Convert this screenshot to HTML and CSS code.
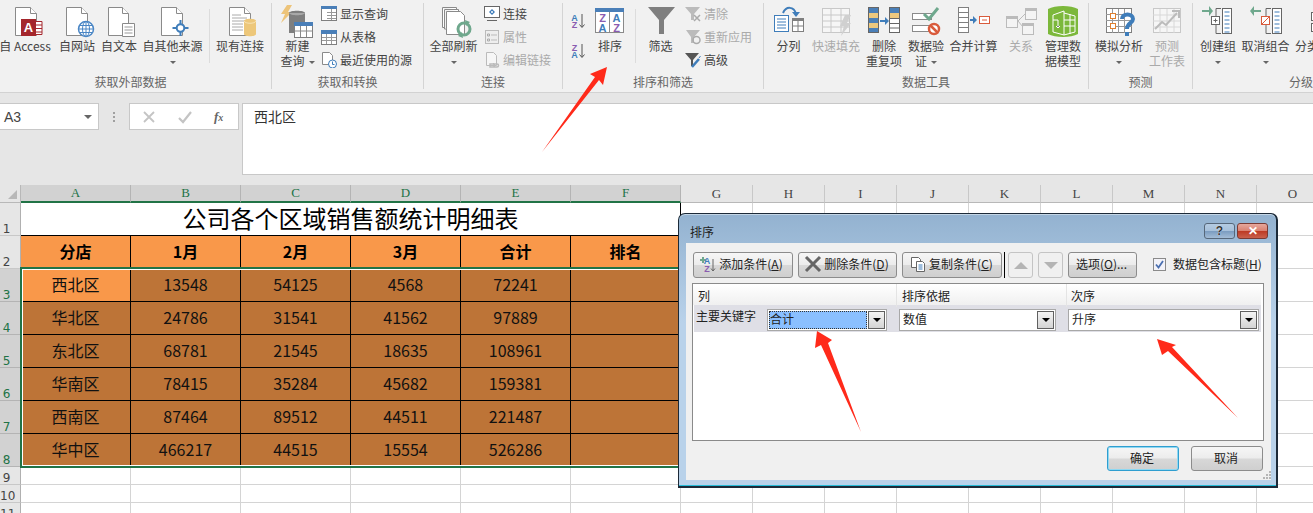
FILE: index.html
```html
<!DOCTYPE html>
<html lang="zh-CN">
<head>
<meta charset="utf-8">
<title>排序</title>
<link rel="stylesheet" href="styles.css">
</head>
<body>
<div class="app">
  <div class="ribbon">
    <section class="group g1">
      <div class="body">
        <div class="big w56 first"><svg class="ico" viewBox="0 0 36 34"><path class="pg" d="M8.500 2.500h15l6 6v22h-21z"/><path class="pg" d="M23.500 2.500v6h6"/><path fill="#fff" stroke="#a4262c" d="M26 16.500h9v13h-9z"/><path stroke="#a4262c" d="M26 20h9M26 23.500h9M26 27h9"/><rect x="14" y="14" width="15" height="17" fill="#a4262c"/><text x="21.500" y="27" class="ltxt wht">A</text></svg><span class="bt">自 Access</span></div>
        <div class="big w36"><svg class="ico" viewBox="0 0 36 34"><path class="pg" d="M7.500 2.500h15l6 6v22h-21z"/><path class="pg" d="M22.500 2.500v6h6"/><circle cx="27" cy="24" r="7.500" fill="#fff" stroke="#4a86c5" stroke-width="1.500"/><path fill="none" stroke="#4a86c5" d="M19.500 24h15M20.500 20.500h13M20.500 27.500h13M27 16.500v15"/><ellipse cx="27" cy="24" rx="3.500" ry="7.500" fill="none" stroke="#4a86c5"/></svg><span class="bt">自网站</span></div>
        <div class="big w36"><svg class="ico" viewBox="0 0 36 34"><path class="pg" d="M7.500 2.500h14l6 6v22h-20z"/><path class="pg" d="M21.500 2.500v6h6"/><path class="pg" d="M21.500 18.500h12v13h-12z"/><path stroke="#999" d="M23.500 22h8M23.500 25h8M23.500 28h8"/></svg><span class="bt">自文本</span></div>
        <div class="big w59"><svg class="ico" viewBox="0 0 36 34"><path class="pg" d="M6.500 2.500h15l6 6v22h-21z"/><path class="pg" d="M21.500 2.500v6h6"/><circle cx="25.500" cy="23" r="3.800" fill="#fff" stroke="#3f7dba" stroke-width="2"/><path stroke="#3f7dba" stroke-width="2" d="M25.500 15v4M25.500 27v4M17.500 23h4M29.500 23h4"/></svg><span class="bt">自其他来源</span><span class="bt"><i class="caret"></i></span></div>
        <i class="sep"></i>
        <div class="big w48"><svg class="ico" viewBox="0 0 36 34"><path class="pg" d="M7.500 2.500h15l6 6v22h-21z"/><path class="pg" d="M22.500 2.500v6h6"/><path stroke="#aaa" d="M10 10h9M10 13h15M10 16h15M10 19h11M10 22h11M10 25h11"/><path fill="#edc77a" d="M22 16c0-3 12-3 12 0v13c0 3-12 3-12 0z"/><path fill="none" stroke="#f7e3b5" d="M22 16c1 3 11 3 12 0"/></svg><span class="bt">现有连接</span></div>
      </div>
      <h3 class="lbl">获取外部数据</h3>
    </section>
    <section class="group g2">
      <div class="body">
        <div class="big w35"><svg class="ico" viewBox="0 0 36 34"><path fill="#edc47a" d="M7 0h5L8 7h4L1 18l4-9H1z"/><path fill="#7f7f7f" d="M9 8c0-3 16-3 16 0v20H9z"/><path fill="#a8a8a8" d="M9 8c1 3 15 3 16 0"/><rect x="14.500" y="17.500" width="18" height="15" fill="#fff" stroke="#7f7f7f"/><rect x="14" y="17" width="19" height="4" fill="#4a7fb8"/><path stroke="#8a8a8a" d="M14.500 26h18M20.500 21v11M26.500 21v11"/></svg><span class="bt">新建</span><span class="bt">查询<i class="caret inl"></i></span></div>
        <div class="small">
          <div class="sr"><svg class="sico" viewBox="0 0 16 16"><rect x=".5" y=".5" width="15" height="14" fill="#fff" stroke="#7f7f7f"/><rect width="16" height="3" fill="#4a7fb8"/><path stroke="#999" d="M10.500 3v11M6 6.500h9M6 9.500h9M6 12.500h9"/></svg>显示查询</div>
          <div class="sr"><svg class="sico" viewBox="0 0 16 16"><rect x=".5" y="1.500" width="15" height="14" fill="#fff" stroke="#7f7f7f"/><rect y="1" width="16" height="4" fill="#4a7fb8"/><path stroke="#999" d="M5.500 5v10M10.500 5v10M1 8.500h14M1 11.500h14"/></svg>从表格</div>
          <div class="sr"><svg class="sico" viewBox="0 0 16 16"><path class="pg" d="M1.500 .5h7l3 3v9h-10z"/><circle cx="11.500" cy="12" r="4" fill="#fff" stroke="#3f7dba"/><path stroke="#3f7dba" fill="none" d="M11.500 9.500v3h2"/></svg>最近使用的源</div>
        </div>
      </div>
      <h3 class="lbl">获取和转换</h3>
    </section>
    <section class="group g3">
      <div class="body">
        <div class="big w49"><svg class="ico" viewBox="0 0 36 34"><path class="pg" d="M6.500 2.500h14v2"/><path class="pg" d="M8.500 4.500h14v2"/><path class="pg" d="M10.500 6.500h14l4 4v19h-18z"/><path class="pg" d="M6.500 2.500v20h2v-18M8.500 22v2h2"/><circle cx="28" cy="24" r="6" fill="none" stroke="#6fa88d" stroke-width="3"/><path fill="#6fa88d" d="M29 15l5 2-4 4zM27 33l-5-2 4-4z"/></svg><span class="bt">全部刷新</span><span class="bt"><i class="caret"></i></span></div>
        <div class="small">
          <div class="sr"><svg class="sico" viewBox="0 0 16 16"><rect x=".5" y=".5" width="15" height="11" fill="#fff" stroke="#666"/><path stroke="#666" d="M3 14.500h10"/><path fill="#3f7dba" d="M8 3l3 3-3 3-3-3z"/><circle cx="8" cy="6" r="1" fill="#fff"/></svg>连接</div>
          <div class="sr dis"><svg class="sico" viewBox="0 0 16 16"><rect x="1.500" y="1.500" width="13" height="13" fill="#eee" stroke="#bbb"/><path stroke="#bbb" d="M7 6h6M7 11h6"/><path stroke="#aaa" fill="none" d="M3.500 5h2v2h-2zM3.500 10h2v2h-2z"/></svg>属性</div>
          <div class="sr dis"><svg class="sico" viewBox="0 0 16 16"><path class="pgd" d="M2.500 .5h7l3 3v10h-10z"/><path fill="none" stroke="#bbb" stroke-width="1.500" d="M6 12h3a1.500 1.500 0 010 3H6zM10 12h3a1.500 1.500 0 010 3h-3z"/></svg>编辑链接</div>
        </div>
      </div>
      <h3 class="lbl">连接</h3>
    </section>
    <section class="group g4">
      <div class="body">
        <div class="sortcol">
          <svg class="sort" viewBox="0 0 15 16"><text x="3.500" y="7.500" class="stxt blue">A</text><text x="3.500" y="15" class="stxt pur">Z</text><path fill="none" stroke="#555" d="M11 1v13M8.500 11.500l2.500 3 2.500-3"/></svg>
          <svg class="sort" viewBox="0 0 15 16"><text x="3.500" y="7.500" class="stxt pur">Z</text><text x="3.500" y="15" class="stxt blue">A</text><path fill="none" stroke="#555" d="M11 1v13M8.500 11.500l2.500 3 2.500-3"/></svg>
        </div>
        <div class="big w36"><svg class="ico" viewBox="0 0 36 34"><rect x="3.500" y="3.500" width="28" height="24" fill="#fff" stroke="#8a8a8a"/><rect x="3" y="3" width="29" height="4" fill="#4a7fb8"/><path stroke="#8a8a8a" d="M17.500 7v21"/><text x="10.500" y="16.500" class="btxt pur">Z</text><text x="10.500" y="26.500" class="btxt blue">A</text><text x="24.500" y="16.500" class="btxt blue">A</text><text x="24.500" y="26.500" class="btxt pur">Z</text></svg><span class="bt">排序</span></div>
        <i class="sep"></i>
        <div class="big w37"><svg class="ico" viewBox="0 0 36 34"><path fill="#7f7f7f" d="M5 2h27L21 15v14h-5V15z"/></svg><span class="bt">筛选</span></div>
        <div class="small">
          <div class="sr dis"><svg class="sico" viewBox="0 0 16 16"><path fill="#bbb" d="M0 1h15L9 8v6H6V8z"/><path stroke="#aaa" stroke-width="1.500" d="M9 9l6 6M15 9l-6 6"/></svg>清除</div>
          <div class="sr dis"><svg class="sico" viewBox="0 0 16 16"><path fill="#bbb" d="M1 1h14L9 8v6H6V8z"/><circle cx="11.500" cy="11" r="3.500" fill="none" stroke="#aaa" stroke-width="1.500"/></svg>重新应用</div>
          <div class="sr"><svg class="sico" viewBox="0 0 16 16"><path fill="#555" d="M0 1h14L8 8v6H6V8z"/><path stroke="#3f7dba" stroke-width="2.500" d="M7 15l7-8"/><path stroke="#3f7dba" d="M14 6l1.500-2"/></svg>高级</div>
        </div>
      </div>
      <h3 class="lbl">排序和筛选</h3>
    </section>
    <section class="group g5">
      <div class="body">
        <div class="big w35"><svg class="ico" viewBox="0 0 36 34"><rect x="3.500" y="10.500" width="14" height="16" fill="#fff" stroke="#3f7dba"/><path stroke="#3f7dba" d="M6 14h9M6 17h9M6 20h9M6 23h9"/><rect x="21.500" y="13.500" width="11" height="13" fill="#fff" stroke="#7f7f7f"/><rect x="21" y="13" width="12" height="3" fill="#7f7f7f"/><path stroke="#7f7f7f" d="M27 16v10M22 21h10"/><path fill="none" stroke="#3f7dba" stroke-width="2" d="M12 8c3-7 11-7 13 1"/><path fill="#3f7dba" d="M21 7h8l-4 5z"/></svg><span class="bt">分列</span></div>
        <div class="big w48 dis"><svg class="ico" viewBox="0 0 36 34"><rect x="4.500" y="3.500" width="27" height="24" fill="#f6f6f6" stroke="#c8c8c8"/><path stroke="#c8c8c8" d="M4 10h27M4 16h27M4 22h27M13 4v24M23 4v24"/><path fill="#d0d0d0" d="M27 10h6l-4 8h4L23 31l3-10h-4z"/></svg><span class="bt">快速填充</span></div>
        <div class="big w36"><svg class="ico" viewBox="0 0 36 34"><rect x="2.500" y="2.500" width="10" height="25" fill="#4a7fb8" stroke="#666"/><rect x="3" y="8" width="9" height="5" fill="#edc87e"/><rect x="3" y="18" width="9" height="5" fill="#edc87e"/><rect x="23.500" y="2.500" width="10" height="25" fill="#fff" stroke="#666"/><rect x="24" y="3" width="9" height="5" fill="#4a7fb8"/><rect x="24" y="8" width="9" height="5" fill="#edc87e"/><path stroke="#666" d="M24 13.500h9M24 18.500h9M24 23h9"/><path stroke="#3f7dba" stroke-width="2" d="M14 16h6"/><path fill="#3f7dba" d="M19 12l4 4-4 4z"/></svg><span class="bt">删除</span><span class="bt">重复项</span></div>
        <div class="big w36"><svg class="ico" viewBox="0 0 36 34"><rect x="4.500" y="8.500" width="19" height="6" fill="#fff" stroke="#8a8a8a"/><rect x="4.500" y="20.500" width="19" height="6" fill="#fff" stroke="#8a8a8a"/><path fill="none" stroke="#6fa88d" stroke-width="3" d="M16 9l5 5 9-11"/><circle cx="26" cy="24" r="5" fill="#fff" stroke="#d95b3c" stroke-width="2.500"/><path stroke="#d95b3c" stroke-width="2.500" d="M22.500 20.500l7 7"/></svg><span class="bt">数据验</span><span class="bt">证<i class="caret inl"></i></span></div>
        <div class="big w47"><svg class="ico" viewBox="0 0 36 34"><rect x="2.500" y="2.500" width="10" height="25" fill="#fff" stroke="#7f7f7f"/><path stroke="#7f7f7f" d="M3 7.500h9M3 12.500h9M3 17.500h9M3 22.500h9"/><path stroke="#3f7dba" stroke-width="2" d="M14 15h4"/><path fill="#3f7dba" d="M17 11l4 4-4 4z"/><rect x="23.500" y="11.500" width="10" height="7" fill="#fff" stroke="#d95b3c"/><path stroke="#d95b3c" d="M26 15h5"/></svg><span class="bt">合并计算</span></div>
        <div class="big w36 dis"><svg class="ico" viewBox="0 0 36 34"><rect x="3.500" y="11.500" width="11" height="11" fill="#f4f4f4" stroke="#bbb"/><rect x="3" y="11" width="12" height="3" fill="#bbb"/><rect x="22.500" y="3.500" width="11" height="11" fill="#f4f4f4" stroke="#bbb"/><rect x="22" y="3" width="12" height="3" fill="#bbb"/><rect x="19.500" y="18.500" width="11" height="11" fill="#f4f4f4" stroke="#bbb"/><rect x="19" y="18" width="12" height="3" fill="#bbb"/><path fill="none" stroke="#bbb" d="M22 9l-7 7 5 6"/></svg><span class="bt">关系</span></div>
        <div class="big w36"><svg class="ico" viewBox="0 0 36 34"><path fill="#7cb83b" d="M3 4c7-4 23-4 30 0v25c-7 4-23 4-30 0z"/><path fill="none" stroke="#fff" d="M8 10l11-4v24l-11-3zM19 8l11 3v16l-11 3M19 15l11 0M19 21l11 0M25 9v20M8 15h5"/><path stroke="#fff" d="M13 15v8M11 21l2 2 2-2"/></svg><span class="bt">管理数</span><span class="bt">据模型</span></div>
      </div>
      <h3 class="lbl">数据工具</h3>
    </section>
    <section class="group g6">
      <div class="body">
        <div class="big w48"><svg class="ico" viewBox="0 0 36 34"><rect x="5.500" y="3.500" width="25" height="24" fill="#fff" stroke="#7f7f7f"/><path stroke="#999" d="M5 9.500h26M5 15.500h26M5 21.500h26M11.500 4v24M17.500 4v24M23.500 4v24"/><rect x="9.500" y="8.500" width="5" height="5" fill="#fff" stroke="#e08030"/><rect x="9.500" y="18.500" width="5" height="5" fill="#fff" stroke="#e08030"/><path fill="none" stroke="#3f7dba" stroke-width="4" d="M21 14c0-6 11-6 11 0 0 4-6 4-6 10"/><rect x="24" y="27" width="4" height="4" fill="#3f7dba"/></svg><span class="bt">模拟分析</span><span class="bt"><i class="caret"></i></span></div>
        <div class="big w36 dis"><svg class="ico" viewBox="0 0 36 34"><rect x="4.500" y="3.500" width="27" height="24" fill="#f6f6f6" stroke="#c8c8c8"/><path stroke="#d8d8d8" d="M4 10h27M4 16h27M4 22h27M11 4v24M18 4v24M25 4v24"/><path fill="none" stroke="#bbb" stroke-width="2" d="M6 24l7-7 4 3 11-12M23 6h7v7"/></svg><span class="bt">预测</span><span class="bt">工作表</span></div>
      </div>
      <h3 class="lbl">预测</h3>
    </section>
    <section class="group g7">
      <div class="body">
        <div class="big w36"><svg class="ico" viewBox="0 0 36 34"><path stroke="#6fa88d" stroke-width="2" d="M2 6h9"/><path fill="#6fa88d" d="M9 1l4 5-4 5z"/><path fill="none" stroke="#666" d="M21 3.500h-5v25h5"/><rect x="11.500" y="11.500" width="8" height="8" fill="#fff" stroke="#666"/><path stroke="#666" d="M13.500 15.500h4M15.500 13.500v4"/><rect x="22.500" y="3.500" width="9" height="25" fill="#fff" stroke="#666"/><path stroke="#3f7dba" d="M24.500 7h5M24.500 11h5M24.500 15h5M24.500 19h5M24.500 23h5M24.500 27h5"/></svg><span class="bt">创建组</span><span class="bt"><i class="caret"></i></span></div>
        <div class="big w47"><svg class="ico" viewBox="0 0 36 34"><path stroke="#6fa88d" stroke-width="2" d="M4 6h9"/><path fill="#6fa88d" d="M6 1L2 6l4 5z"/><path fill="none" stroke="#666" d="M23 3.500h-5v25h5"/><rect x="13.500" y="11.500" width="8" height="8" fill="#fff" stroke="#d95b3c"/><path stroke="#d95b3c" d="M14 19l7-7"/><rect x="24.500" y="3.500" width="9" height="25" fill="#fff" stroke="#666"/><path stroke="#3f7dba" d="M26.500 7h5M26.500 11h5M26.500 15h5M26.500 19h5M26.500 23h5M26.500 27h5"/></svg><span class="bt">取消组合</span><span class="bt"><i class="caret"></i></span></div>
        <div class="big w48"><svg class="ico" viewBox="0 0 36 34"><path fill="none" stroke="#666" d="M20 3.500h-6v25h6"/><rect x="10.500" y="7.500" width="8" height="8" fill="#fff" stroke="#666"/><path stroke="#666" d="M12.500 11.500h4M14.500 9.500v4"/><rect x="10.500" y="18.500" width="8" height="8" fill="#fff" stroke="#666"/><path stroke="#666" d="M12.500 22.500h4M14.500 20.500v4"/></svg><span class="bt">分类汇总</span></div>
      </div>
      <h3 class="lbl">分级显示</h3>
    </section>
  </div>

  <div class="fbar">
    <div class="namebox"><span>A3</span><i class="caret"></i></div>
    <div class="dots"><i></i><i></i><i></i></div>
    <div class="fxbox">
      <svg class="fxi" viewBox="0 0 14 14"><path fill="none" stroke="#c4c4c4" stroke-width="1.800" d="M2 2l10 10M12 2L2 12"/></svg>
      <svg class="fxi" viewBox="0 0 14 14"><path fill="none" stroke="#c4c4c4" stroke-width="2.200" d="M1 8l4 4 8-10"/></svg>
      <span class="fx">f<small>x</small></span>
    </div>
    <div class="finput">西北区</div>
  </div>

  <div class="sheet">
    <table class="grid">
      <colgroup><col class="c0"><col class="ca"><col class="ca"><col class="ca"><col class="ca"><col class="ca"><col class="ca"><col class="cg"><col class="cg"><col class="cg"><col class="cg"><col class="cg"><col class="cg"><col class="cg"><col class="cg"><col class="cg"></colgroup>
      <tr class="hd"><th class="corner"><i></i></th><th class="ch on">A</th><th class="ch on">B</th><th class="ch on">C</th><th class="ch on">D</th><th class="ch on">E</th><th class="ch on">F</th><th class="ch">G</th><th class="ch">H</th><th class="ch">I</th><th class="ch">J</th><th class="ch">K</th><th class="ch">L</th><th class="ch">M</th><th class="ch">N</th><th class="ch">O</th></tr>
      <tr class="rw"><th class="rh"><span>1</span></th><td colspan="6" class="dk title">公司各个区域销售额统计明细表</td><td></td><td></td><td></td><td></td><td></td><td></td><td></td><td></td><td></td></tr>
      <tr class="rw"><th class="rh"><span>2</span></th><td class="dk hc">分店</td><td class="dk hc">1月</td><td class="dk hc">2月</td><td class="dk hc">3月</td><td class="dk hc">合计</td><td class="dk hc">排名</td><td></td><td></td><td></td><td></td><td></td><td></td><td></td><td></td><td></td></tr>
      <tr class="rw"><th class="rh on"><span>3</span></th><td class="dk active">西北区</td><td class="dk sel">13548</td><td class="dk sel">54125</td><td class="dk sel">4568</td><td class="dk sel">72241</td><td class="dk sel"></td><td></td><td></td><td></td><td></td><td></td><td></td><td></td><td></td><td></td></tr>
      <tr class="rw"><th class="rh on"><span>4</span></th><td class="dk sel">华北区</td><td class="dk sel">24786</td><td class="dk sel">31541</td><td class="dk sel">41562</td><td class="dk sel">97889</td><td class="dk sel"></td><td></td><td></td><td></td><td></td><td></td><td></td><td></td><td></td><td></td></tr>
      <tr class="rw"><th class="rh on"><span>5</span></th><td class="dk sel">东北区</td><td class="dk sel">68781</td><td class="dk sel">21545</td><td class="dk sel">18635</td><td class="dk sel">108961</td><td class="dk sel"></td><td></td><td></td><td></td><td></td><td></td><td></td><td></td><td></td><td></td></tr>
      <tr class="rw"><th class="rh on"><span>6</span></th><td class="dk sel">华南区</td><td class="dk sel">78415</td><td class="dk sel">35284</td><td class="dk sel">45682</td><td class="dk sel">159381</td><td class="dk sel"></td><td></td><td></td><td></td><td></td><td></td><td></td><td></td><td></td><td></td></tr>
      <tr class="rw"><th class="rh on"><span>7</span></th><td class="dk sel">西南区</td><td class="dk sel">87464</td><td class="dk sel">89512</td><td class="dk sel">44511</td><td class="dk sel">221487</td><td class="dk sel"></td><td></td><td></td><td></td><td></td><td></td><td></td><td></td><td></td><td></td></tr>
      <tr class="rw"><th class="rh on"><span>8</span></th><td class="dk sel">华中区</td><td class="dk sel">466217</td><td class="dk sel">44515</td><td class="dk sel">15554</td><td class="dk sel">526286</td><td class="dk sel"></td><td></td><td></td><td></td><td></td><td></td><td></td><td></td><td></td><td></td></tr>
      <tr class="rs"><th class="rh"><span>9</span></th><td></td><td></td><td></td><td></td><td></td><td></td><td></td><td></td><td></td><td></td><td></td><td></td><td></td><td></td><td></td></tr>
      <tr class="rs"><th class="rh"><span>10</span></th><td></td><td></td><td></td><td></td><td></td><td></td><td></td><td></td><td></td><td></td><td></td><td></td><td></td><td></td><td></td></tr>
      <tr class="rs"><th class="rh"><span>11</span></th><td></td><td></td><td></td><td></td><td></td><td></td><td></td><td></td><td></td><td></td><td></td><td></td><td></td><td></td><td></td></tr>
    </table>
    <div class="selection"></div>
  </div>

  <div class="dialog">
    <div class="dtitle">
      <span class="dname">排序</span>
      <span class="wbtn help">?</span>
      <span class="wbtn close">✕</span>
    </div>
    <div class="dbody">
      <div class="tools">
        <div class="btn b100 add"><svg class="bi" viewBox="0 0 18 18"><path stroke="#6fa88d" stroke-width="2" d="M1 5h6M4 2v6"/><text x="8" y="9" class="stxt blue">A</text><text x="8" y="17" class="stxt pur">Z</text><path fill="none" stroke="#666" d="M14 4v12M12 13.500l2 2.500 2-2.500"/></svg>添加条件(<u>A</u>)</div>
        <div class="btn b99"><svg class="bi" viewBox="0 0 18 18"><path stroke="#666" stroke-width="3" d="M2 2l14 14M16 2L2 16"/></svg>删除条件(<u>D</u>)</div>
        <div class="btn b100"><svg class="bi" viewBox="0 0 18 18"><path fill="#fff" stroke="#666" d="M2.500 2.500h7l2 2v8h-9z"/><path fill="#fff" stroke="#666" d="M7.500 6.500h6l2 2v8h-8z"/><path stroke="#3f7dba" d="M9.500 10h4M9.500 12h4M9.500 14h4"/></svg>复制条件(<u>C</u>)</div>
        <i class="cursor"></i>
        <div class="btn off b25"><i class="tri up"></i></div>
        <div class="btn off b25"><i class="tri down"></i></div>
        <div class="btn b69">选项(<u>O</u>)...</div>
        <div class="check"><svg viewBox="0 0 13 13"><rect x=".5" y=".5" width="12" height="12" fill="#f2f2f8" stroke="#8a8a8a"/><path fill="none" stroke="#4a6fb0" stroke-width="1.800" d="M3 6.500l2.500 3L10 3"/></svg></div>
        <label class="chk">数据包含标题(<u>H</u>)</label>
      </div>
      <div class="panel">
        <div class="phead"><span class="pc p1">列</span><span class="pc p2">排序依据</span><span class="pc p3">次序</span></div>
        <div class="prow">
          <span class="key">主要关键字</span>
          <div class="combo c1"><span class="val focus">合计</span><i class="drop"></i></div>
          <div class="combo c2"><span class="val">数值</span><i class="drop"></i></div>
          <div class="combo c3"><span class="val">升序</span><i class="drop"></i></div>
        </div>
      </div>
      <div class="foot">
        <div class="btn ok">确定</div>
        <div class="btn cancel">取消</div>
      </div>
      <svg class="grip" viewBox="0 0 8 8"><path fill="#b5b5b5" d="M6 0h2v2H6zM3 3h2v2H3zM6 3h2v2H6zM0 6h2v2H0zM3 6h2v2H3zM6 6h2v2H6z"/></svg>
    </div>
  </div>

  <svg class="arrows" viewBox="0 0 1313 513">
    <polygon points="542,152 595,77 590,74 607,67 603,85 599,80"/>
    <polygon points="817,331 815,348 821,345 861,432 828,343 832,340"/>
    <polygon points="1157,339 1162,355 1168,351 1238,418 1172,347 1176,345"/>
  </svg>
</div>
</body>
</html>
```
FILE: styles.css
```css
* { box-sizing: border-box; }
html, body { margin: 0; padding: 0; height: 100%; }
body { overflow: hidden; background: #fff; font-family: "Noto Sans CJK SC", "Liberation Sans", sans-serif; color: #222; }
.app { position: relative; width: 1313px; height: 513px; overflow: hidden; display: flex; flex-direction: column; }

/* ribbon */
.ribbon { flex: none; height: 93px; display: flex; align-items: flex-start; background: #f1f1f1; border-bottom: 1px solid #d2d2d2; padding-top: 3px; font-size: 12px; color: #444; overflow: hidden; }
.group { flex: none; height: 86px; border-right: 1px solid #d4d4d4; display: flex; flex-direction: column; }
.g1 { width: 272px; }
.g2 { width: 152px; }
.g3 { width: 139px; }
.g4 { width: 201px; }
.g5 { width: 325px; }
.g6 { width: 104px; }
.g7 { width: 160px; border-right: 0; }
.body { flex: none; height: 73px; display: flex; gap: 6px; }
.g2 .body, .g4 .body { padding-left: 8px; }
.g3 .body { padding-left: 5px; }
.g5 .body, .g7 .body { padding-left: 7px; }
.g6 .body { padding-left: 6px; }
.lbl { flex: none; margin: 0; height: 13px; line-height: 11px; font-size: 12px; font-weight: 400; color: #666; text-align: center; white-space: nowrap; }
.g1 .lbl { padding-right: 10px; }
.g7 .lbl { text-align: left; padding-left: 96px; }
.big { flex: none; display: flex; flex-direction: column; align-items: center; padding-top: 2px; line-height: 15px; white-space: nowrap; }
.first { margin-left: -3px; }
.w35 { width: 35px; } .w36 { width: 36px; } .w37 { width: 37px; } .w47 { width: 47px; } .w48 { width: 48px; } .w49 { width: 49px; } .w56 { width: 56px; } .w59 { width: 59px; }
.ico { flex: none; width: 36px; height: 34px; margin-bottom: -1px; }
.bt { display: block; height: 15px; }
.dis { color: #aaa; }
.caret { display: inline-block; width: 0; height: 0; border: 3px solid transparent; border-top: 3px solid #666; border-bottom: 0; vertical-align: middle; }
.inl { margin-left: 4px; }
.sep { flex: none; width: 1px; height: 54px; margin: 6px 0 0 1px; background: #dcdcdc; }
.small { flex: none; display: flex; flex-direction: column; }
.sr { height: 23px; display: flex; align-items: center; gap: 3px; white-space: nowrap; line-height: 20px; padding-bottom: 1px; }
.sico { flex: none; width: 16px; height: 16px; }
.sortcol { flex: none; width: 15px; display: flex; flex-direction: column; gap: 14px; padding-top: 10px; }
.sort { width: 15px; height: 16px; }
.pg { fill: #fff; stroke: #8a8a8a; }
.pgd { fill: #f6f6f6; stroke: #bbb; }
.ltxt { font: 700 13px "Liberation Sans", sans-serif; text-anchor: middle; }
.wht { fill: #fff; }
.stxt { font: 700 9px "Liberation Sans", sans-serif; text-anchor: middle; }
.btxt { font: 700 11px "Liberation Sans", sans-serif; text-anchor: middle; }
.blue { fill: #3f7dba; }
.pur { fill: #8a5cb0; }

/* formula bar */
.fbar { flex: none; height: 92px; background: #e6e6e6; display: flex; align-items: flex-start; padding-top: 10px; }
.namebox { width: 99px; height: 27px; background: #fff; border: 1px solid #c8c8c8; border-left: 0; display: flex; align-items: center; justify-content: space-between; padding: 0 6px 0 4px; font: 14px "Liberation Sans", sans-serif; color: #444; }
.namebox .caret { border-width: 4px; border-top-width: 4px; border-bottom: 0; }
.dots { width: 29px; height: 27px; margin-right: 1px; display: flex; flex-direction: column; align-items: center; justify-content: center; gap: 2px; }
.dots i { width: 2px; height: 2px; background: #a0a0a0; }
.fxbox { width: 110px; height: 27px; background: #fff; border: 1px solid #c8c8c8; display: flex; align-items: center; gap: 22px; padding-left: 12px; }
.fxi { width: 14px; height: 14px; flex: none; }
.fx { font: italic 700 13px "Liberation Serif", serif; color: #666; }
.fx small { font-size: 10px; }
.finput { flex: 1; height: 72px; margin-left: 3px; background: #fff; border: 1px solid #c8c8c8; border-right: 0; padding: 1px 0 0 11px; font-size: 14px; line-height: 22px; color: #333; }

/* sheet */
.sheet { position: relative; flex: none; height: 328px; overflow: hidden; }
.grid { border-collapse: separate; border-spacing: 0; table-layout: fixed; width: 1329px; }
.c0 { width: 21px; }
.ca { width: 110px; }
.cg { width: 72px; }
.grid th, .grid td { padding: 0; }
.hd { height: 18px; }
.rw { height: 33px; }
.rs { height: 18px; }
.corner { position: relative; background: #e6e6e6; border-right: 1px solid #b8b8b8; border-bottom: 1px solid #b8b8b8; height: 18px; }
.corner i { position: absolute; right: 3px; bottom: 3px; width: 0; height: 0; border-left: 9px solid transparent; border-bottom: 9px solid #b8b8b8; }
.ch { height: 18px; background: #e6e6e6; border-right: 1px solid #c8c8c8; border-bottom: 1px solid #b8b8b8; font: 400 13px/16px "Liberation Serif", serif; color: #444; text-align: center; }
.ch.on { background: #d2d2d2; border-right-color: #b4b4b4; border-bottom: 2px solid #217346; color: #217346; }
.rh { background: #e6e6e6; border-right: 1px solid #b0b0b0; border-bottom: 1px solid #c8c8c8; font: 400 12px/12px "DejaVu Sans", sans-serif; color: #444; text-align: left; vertical-align: bottom; }
.rh span { display: block; width: 13px; text-align: center; white-space: nowrap; }
.rh.on { background: #d2d2d2; color: #217346; border-bottom-color: #b4b4b4; }
.grid td { border-right: 1px solid #d4d4d4; border-bottom: 1px solid #d4d4d4; }
.grid td.dk { border-right-color: #000; border-bottom-color: #000; padding-bottom: 2px; text-align: center; font-size: 16px; line-height: 1; color: #111; }
.grid td.title { font-size: 24px; background: #fff; color: #000; }
.grid td.hc { background: #f9984a; font-weight: 700; color: #000; }
.grid td.active { background: #f9984a; }
.grid td.sel { background: #bd7437; }
.selection { position: absolute; left: 20px; top: 82px; width: 662px; height: 201px; border: 2px solid #217346; box-shadow: inset 0 0 0 1px #fff; pointer-events: none; }

/* dialog */
.dialog { position: absolute; left: 678px; top: 213px; width: 600px; height: 275px; display: flex; flex-direction: column; background: linear-gradient(#93b2d0, #b9d2ea 40%); border: 1px solid #1c2a38; border-right-width: 2px; border-bottom-width: 2px; border-radius: 7px 7px 0 0; box-shadow: inset 0 -1px 0 #27bcd8, inset 0 1px 0 #c4d6e6; font-size: 12px; color: #222; }
.dtitle { flex: none; height: 29px; display: flex; align-items: flex-start; gap: 2px; padding: 9px 8px 0 11px; }
.dname { flex: 1; padding-top: 1px; line-height: 16px; }
.wbtn { flex: none; width: 31px; height: 16px; border: 1px solid #56677a; border-radius: 3px; text-align: center; font: 700 12px/14px "Liberation Sans", sans-serif; color: #fff; }
.help { background: linear-gradient(#b4cbe2 0, #a6c0da 50%, #7b9cc0 52%, #a3bcd6); color: #333; text-shadow: 0 0 1px #fff; }
.close { background: linear-gradient(#e6a79c 0, #d98070 50%, #bd3a24 52%, #c9604c); border-color: #7a3a34; }
.dbody { position: relative; flex: none; width: 585px; height: 237px; margin-left: 7px; background: #f0f0f0; padding-top: 9px; }
.tools { height: 26px; display: flex; gap: 5px; padding-left: 7px; align-items: stretch; }
.btn { flex: none; display: flex; align-items: center; justify-content: center; border: 1px solid #8c8c8c; border-radius: 3px; background: linear-gradient(#f6f6f6, #ececec 48%, #d8d8d8 52%, #cfcfcf); white-space: nowrap; line-height: 16px; padding: 0 2px 2px 0; }
.btn.add { padding-right: 4px; }
.btn.off { border-color: #c4c4c4; background: #f0f0f0; padding: 0; }
.b100 { width: 100px; } .b99 { width: 99px; } .b25 { width: 25px; } .b69 { width: 69px; }
.bi { width: 18px; height: 18px; flex: none; margin-right: 2px; }
.cursor { flex: none; width: 1px; background: #000; margin: 0 -2px 0 -3px; }
.tri { width: 0; height: 0; border: 7px solid transparent; }
.tri.up { border-top: 0; border-bottom: 7px solid #b4b4b4; }
.tri.down { border-bottom: 0; border-top: 7px solid #b4b4b4; }
.check { flex: none; margin-left: 11px; padding-top: 6px; margin-right: 2px; }
.check svg { display: block; width: 13px; height: 13px; }
.chk { flex: none; line-height: 24px; white-space: nowrap; }
.panel { width: 572px; height: 158px; margin: 5px 0 0 6px; background: #fff; border: 1px solid #8a8a8a; }
.phead { height: 21px; display: grid; grid-template-columns: 204px 170px 1fr; background: linear-gradient(#fff, #f0f0f0); margin-right: 2px; }
.pc { line-height: 23px; border-right: 1px solid #e4e4e4; }
.p1 { padding-left: 5px; }
.p2 { padding-left: 5px; }
.p3 { padding-left: 4px; border-right: 0; }
.prow { height: 27px; margin: 0 2px 0 1px; display: flex; align-items: flex-start; background: #dfdfe6; padding-top: 4px; gap: 12px; }
.key { flex: none; width: 61px; padding-left: 2px; line-height: 14px; white-space: nowrap; }
.combo { flex: none; height: 22px; display: flex; background: #fff; border: 1px solid #a8a8a8; padding: 1px; }
.c1 { width: 120px; }
.c2 { width: 157px; }
.c3 { width: 191px; }
.val { flex: 1; line-height: 16px; padding-left: 2px; }
.val.focus { background: #8abfff; outline: 1px dotted #333; outline-offset: -1px; margin-right: 1px; padding-left: 1px; }
.drop { flex: none; position: relative; width: 17px; border: 1px solid #606060; background: linear-gradient(#f4f4f4, #d4d4d4); display: flex; align-items: center; justify-content: center; }
.drop::after { content: ""; width: 0; height: 0; border: 4px solid transparent; border-top: 4px solid #000; border-bottom: 0; }
.foot { display: flex; justify-content: flex-end; gap: 12px; margin: 5px 8px 0 0; height: 25px; }
.ok, .cancel { width: 72px; }
.ok { border-color: #2f9ed0; box-shadow: inset 0 0 0 1px #8fd8f2; }
.grip { position: absolute; right: 0; bottom: 1px; width: 8px; height: 8px; }

/* annotations */
.arrows { position: absolute; left: 0; top: 0; width: 1313px; height: 513px; pointer-events: none; }
.arrows polygon { fill: #ff2a1a; }
```
